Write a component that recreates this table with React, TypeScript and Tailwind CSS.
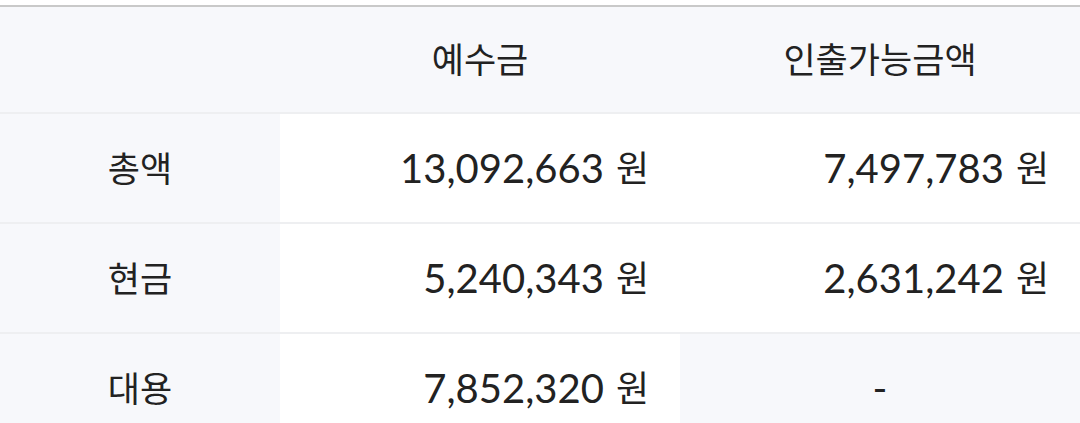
const ROWS = [
  { label: '총액', deposit: '13,092,663', withdraw: '7,497,783' },
  { label: '현금', deposit: '5,240,343', withdraw: '2,631,242' },
  { label: '대용', deposit: '7,852,320', withdraw: null },
];

function Won({ value }: { value: string }) {
  return (
    <>
      {value}
      <span className="text-[36px] ml-[12px]">원</span>
    </>
  );
}

export default function App() {
  return (
    <div
      className="w-[1080px] h-[423px] overflow-hidden bg-white pt-[5px] text-[40px] text-[#222]"
      style={{ fontFamily: "Lato, 'Noto Sans CJK KR', sans-serif" }}
    >
      <div className="border-t-2 border-[#c9c9c9]">
        {/* Header */}
        <div className="grid grid-cols-[280px_400px_400px] h-[107px] bg-[#f7f8fb] border-b-2 border-[#eeeff1] text-[35px]">
          <div />
          <div className="flex items-center justify-center">예수금</div>
          <div className="flex items-center justify-center">인출가능금액</div>
        </div>

        {ROWS.map((row) => (
          <div
            key={row.label}
            className="grid grid-cols-[280px_400px_400px] h-[110px] border-b-2 border-[#eeeff1]"
          >
            <div className="flex items-center justify-center bg-[#f7f8fb] text-[35px]">{row.label}</div>
            <div className="flex items-center justify-end pr-[31px] bg-white">
              <Won value={row.deposit} />
            </div>
            {row.withdraw ? (
              <div className="flex items-center justify-end pr-[31px] bg-white">
                <Won value={row.withdraw} />
              </div>
            ) : (
              <div className="flex items-center justify-center bg-[#f7f8fb]">-</div>
            )}
          </div>
        ))}
      </div>
    </div>
  );
}
